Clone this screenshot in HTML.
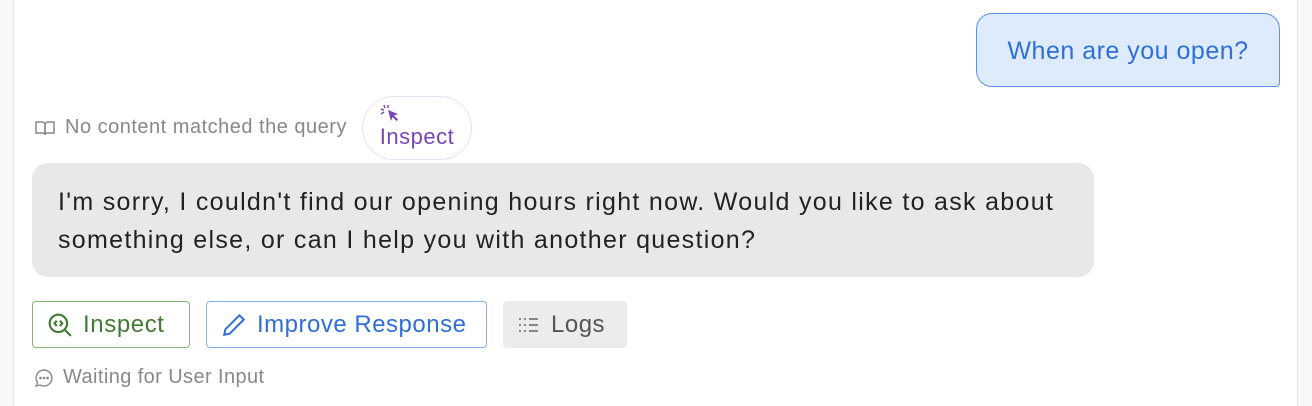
<!DOCTYPE html>
<html><head><style>
body{margin:0;width:1312px;height:406px;background:#fff;font-family:"Liberation Sans",Arial,sans-serif;position:relative;overflow:hidden}
.lb{position:absolute;left:0;top:0;width:13px;height:406px;background:#f7f7f7;border-right:1px solid #e3e3e3}
.rb{position:absolute;left:1297px;top:0;width:15px;height:406px;background:#f7f7f7;border-left:1px solid #e3e3e3}
.user{position:absolute;left:976px;top:13px;width:302px;height:72px;background:#ddebfd;border:1.5px solid #5b93ec;border-radius:16px 16px 4px 16px;color:#2f6fd6;font-size:25px;letter-spacing:0.5px;line-height:74px;text-align:center}
.meta{position:absolute;left:34px;top:116px;color:#888;font-size:20px;letter-spacing:0.5px;display:flex;align-items:center;gap:9px}
.pill{position:absolute;left:362px;top:96px;width:110px;height:64px;border:1.5px solid #eadff7;border-radius:32px;color:#7a45b8;font-size:22px;letter-spacing:0.5px;text-align:center;box-sizing:border-box}
.bot{position:absolute;left:32px;top:163px;width:1062px;height:114px;background:#e8e8e8;border-radius:16px;box-sizing:border-box;padding:20px 10px 20px 26px;font-size:25px;letter-spacing:1.3px;line-height:38px;color:#222;white-space:nowrap}
.btn{position:absolute;top:301px;height:47px;box-sizing:border-box;border-radius:4px;font-size:24px;display:flex;align-items:center;gap:10px;padding:0 14px}
.st{position:absolute;left:34px;top:366px;color:#888;font-size:20px;letter-spacing:0.4px;display:flex;align-items:center;gap:9px}
</style></head><body>
<div class="lb"></div><div class="rb"></div>
<div class="user">When are you open?</div>
<div class="meta"><svg width="22" height="20" viewBox="0 0 22 20" fill="none" stroke="#888" stroke-width="1.5"><path d="M2 4h6a3 3 0 013 3v10a2 2 0 00-2-2H2z"/><path d="M20 4h-6a3 3 0 00-3 3v10a2 2 0 012-2h7z"/></svg>No content matched the query</div>
<div class="pill"><svg style="display:block;margin:7px 0 0 17px" width="22" height="20" viewBox="0 0 22 20"><path d="M8 6l10 4-4 1.5 4 4-1.5 1.5-4-4L11 17z" fill="#7a45b8"/><path d="M4 1l1 3M1 5l3 1M8 1v3M1 10l3-2" stroke="#7a45b8" stroke-width="1.5"/></svg><div style="margin-top:0px">Inspect</div></div>
<div class="bot">I'm sorry, I couldn't find our opening hours right now. Would you like to ask about<br>something else, or can I help you with another question?</div>
<div class="btn" style="left:32px;width:158px;border:1.5px solid #86b57a;color:#427a35;letter-spacing:0.6px"><svg width="26" height="26" viewBox="0 0 24 24" fill="none" stroke="#427a35" stroke-width="2"><circle cx="10.5" cy="10.5" r="8"/><path d="M16.5 16.5L22 22M9 8l-2 2.5L9 13M12 8l2 2.5L12 13"/></svg>Inspect</div>
<div class="btn" style="left:206px;width:281px;border:1.5px solid #85aef0;color:#2f6fd6;letter-spacing:0.5px"><svg width="26" height="26" viewBox="0 0 24 24" fill="none" stroke="#2f6fd6" stroke-width="1.8"><path d="M17 3l4 4L8 20l-5 1 1-5z"/></svg>Improve Response</div>
<div class="btn" style="left:503px;width:124px;background:#ececec;color:#555;letter-spacing:0.5px"><svg width="24" height="18" viewBox="0 0 22 18" stroke="#666" stroke-width="1.6"><path d="M1 3h2M6 3h2M11 3h9M1 9h2M6 9h2M11 9h9M1 15h2M6 15h2M11 15h9"/></svg>Logs</div>
<div class="st"><svg width="20" height="20" viewBox="0 0 20 20" fill="none" stroke="#888" stroke-width="1.4"><path d="M10 2a8 8 0 11-4 15l-4 1 1.5-3.5A8 8 0 0110 2z"/><circle cx="6.5" cy="10" r=".6" fill="#888"/><circle cx="10" cy="10" r=".6" fill="#888"/><circle cx="13.5" cy="10" r=".6" fill="#888"/></svg>Waiting for User Input</div>
</body></html>
